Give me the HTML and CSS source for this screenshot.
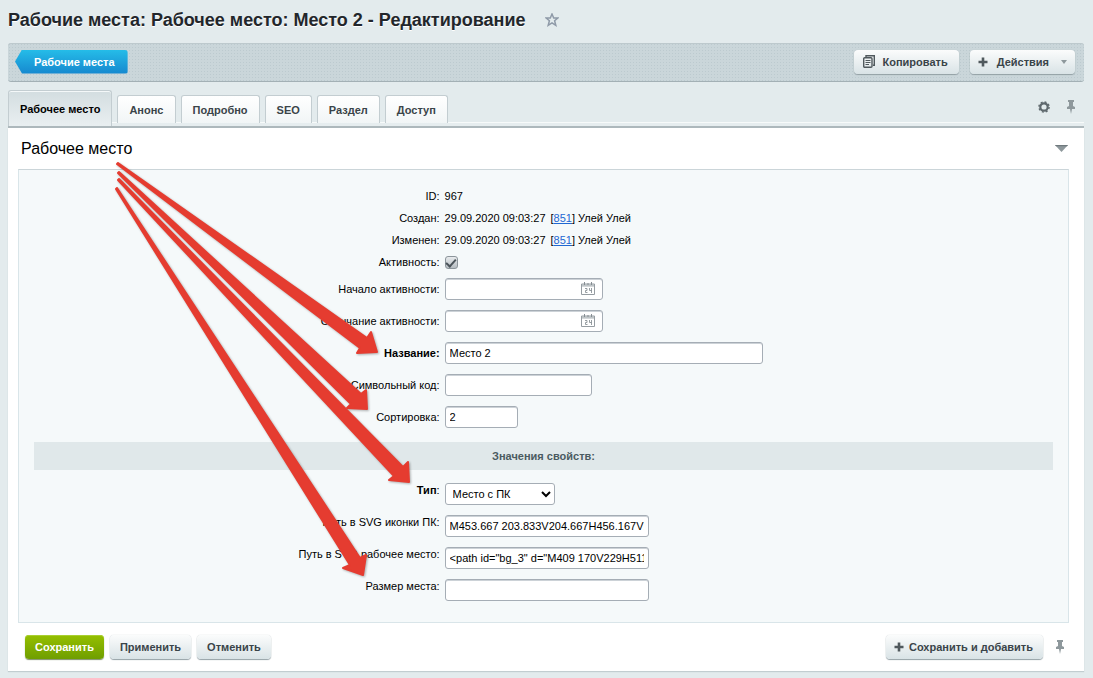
FILE: index.html
```html
<!DOCTYPE html>
<html lang="ru">
<head>
<meta charset="utf-8">
<title>Рабочее место: Место 2 - Редактирование</title>
<link rel="stylesheet" href="styles.css">
</head>
<body>
<svg class="sprite" aria-hidden="true">
  <symbol id="pin" viewBox="0 0 10 14"><path d="M2 0h6v2H7v4l2 1v2H6l-1 5-1-5H1V7l2-1V2H2z" fill="#8e989c"/></symbol>
  <symbol id="plus" viewBox="0 0 10 10"><path d="M3.700.5h2.600v3.200h3.200v2.600H6.300v3.200H3.700V6.300H.5V3.700h3.200z" fill="#50595d"/></symbol>
  <symbol id="calendar" viewBox="0 0 14 13">
    <path d="M.5 2h13v10.500H.5z" fill="#fff" stroke="#969da2"/>
    <path d="M1 3h12M1 4h12" stroke="#a9b0b4"/>
    <path d="M3.500 0v3M7 1v2M10.500 0v3" stroke="#868e93"/>
    <path d="M4 6.500h2v2H4.500v2h2M8.500 6v2.500h2.500M10.500 6v5" fill="none" stroke="#8c9499" stroke-width=".9"/>
  </symbol>
</svg>
<header class="page-head">
  <h1 class="page-title">Рабочие места: Рабочее место: Место 2 - Редактирование</h1>
  <button class="icon-btn" type="button" aria-label="В избранное">
    <svg width="14" height="14" viewBox="0 0 14 14"><path d="M7 1l1.700 4h4.200L9.600 7.800l1.200 4.500L7 9.800l-3.800 2.500 1.200-4.500L1.100 5h4.200z" fill="none" stroke="#8f9aa8" stroke-width="1.500"/></svg>
  </button>
</header>
<main class="page">
  <nav class="toolbar">
    <a class="back" href="#">Рабочие места</a>
    <div class="toolbar-actions">
      <button class="btn" type="button">
        <svg class="copy-icon" width="12" height="13" viewBox="0 0 12 13"><path d="M3 2.500V.7h8.300v9.600H10" fill="none" stroke="#50595d" stroke-width="1.400"/><rect x=".7" y="2.700" width="8.300" height="9.600" rx="1" fill="none" stroke="#50595d" stroke-width="1.400"/><path d="M2.500 5.500h5M2.500 7.500h5M2.500 9.500h3.500" stroke="#50595d"/></svg>
        Копировать
      </button>
      <button class="btn" type="button">
        <svg class="plus-icon" width="10" height="10"><use href="#plus"/></svg>
        Действия
        <svg class="caret" width="6" height="4" viewBox="0 0 6 4"><path d="M0 0h6L3 4z" fill="#8e989c"/></svg>
      </button>
    </div>
  </nav>
  <div class="tabs">
    <button class="tab tab-active" type="button">Рабочее место</button>
    <button class="tab" type="button">Анонс</button>
    <button class="tab" type="button">Подробно</button>
    <button class="tab" type="button">SEO</button>
    <button class="tab" type="button">Раздел</button>
    <button class="tab" type="button">Доступ</button>
    <div class="tab-tools">
      <button class="icon-btn" type="button" aria-label="Настройки">
        <svg width="12" height="12" viewBox="0 0 12 12"><circle cx="6" cy="6" r="3.700" fill="none" stroke="#5f696e" stroke-width="2.200"/><circle cx="6" cy="6" r="5.100" fill="none" stroke="#5f696e" stroke-width="1.400" stroke-dasharray="2 2"/></svg>
      </button>
      <button class="icon-btn" type="button" aria-label="Закрепить"><svg width="10" height="14"><use href="#pin"/></svg></button>
    </div>
  </div>
  <form class="card">
    <div class="card-head">
      <h2 class="card-title">Рабочее место</h2>
      <button class="icon-btn" type="button" aria-label="Свернуть">
        <svg width="13" height="7" viewBox="0 0 13 7"><path d="M0 0h13L6.500 7z" fill="#8e989c"/><path d="M0 0h13L12 1.200H1z" fill="#6f797d"/></svg>
      </button>
    </div>
    <div class="panel">
      <div class="row"><span class="label">ID:</span><span>967</span></div>
      <div class="row"><span class="label">Создан:</span><span class="stamp"><span>29.09.2020 09:03:27</span><span>[<a href="#">851</a>] Улей Улей</span></span></div>
      <div class="row"><span class="label">Изменен:</span><span class="stamp"><span>29.09.2020 09:03:27</span><span>[<a href="#">851</a>] Улей Улей</span></span></div>
      <div class="row"><label class="label" for="active">Активность:</label><input class="check" type="checkbox" id="active" checked></div>
      <div class="row row-field"><label class="label" for="from">Начало активности:</label><div class="date"><input class="field" type="text" id="from"><svg class="date-icon" width="14" height="13"><use href="#calendar"/></svg></div></div>
      <div class="row row-field"><label class="label" for="to">Окончание активности:</label><div class="date"><input class="field" type="text" id="to"><svg class="date-icon" width="14" height="13"><use href="#calendar"/></svg></div></div>
      <div class="row row-field"><label class="label required" for="name">Название:</label><input class="field field-name" type="text" id="name" value="Место 2"></div>
      <div class="row row-field"><label class="label" for="code">Символьный код:</label><input class="field field-code" type="text" id="code"></div>
      <div class="row row-field"><label class="label" for="sort">Сортировка:</label><input class="field field-sort" type="text" id="sort" value="2"></div>
      <h3 class="section">Значения свойств:</h3>
      <div class="row row-field row-prop"><label class="label" for="type"><b>Тип</b>:</label><select class="field field-type" id="type"><option>Место с ПК</option></select></div>
      <div class="row row-field row-prop"><label class="label" for="icon">Путь в SVG иконки ПК:</label><input class="field field-prop" type="text" id="icon" value="M453.667 203.833V204.667H456.167V199.667"></div>
      <div class="row row-field row-prop"><label class="label" for="place">Путь в SVG рабочее место:</label><input class="field field-prop" type="text" id="place" value="&lt;path id=&quot;bg_3&quot; d=&quot;M409 170V229H511V170"></div>
      <div class="row row-field row-prop"><label class="label" for="size">Размер места:</label><input class="field field-prop" type="text" id="size"></div>
    </div>
    <footer class="card-foot">
      <button class="btn btn-save" type="button">Сохранить</button>
      <button class="btn btn-foot" type="button">Применить</button>
      <button class="btn btn-foot" type="button">Отменить</button>
      <button class="btn btn-add" type="button"><svg width="10" height="10"><use href="#plus"/></svg>Сохранить и добавить</button>
      <button class="icon-btn" type="button" aria-label="Закрепить"><svg width="10" height="14"><use href="#pin"/></svg></button>
    </footer>
  </form>
</main>
<svg class="arrows" width="420" height="590" viewBox="0 0 420 590" aria-hidden="true">
  <g fill="#e53c30" stroke="#e53c30" stroke-width="2" stroke-linejoin="round">
    <path d="M117 164L118 163L367 338L371 332L377 352L357 353L360 348Z"/>
    <path d="M118 173L119 172L361 394L366 390L367 409L347 408L351 404Z"/>
    <path d="M118 180L119 179L403 467L408 462L409 482L389 480L394 476Z"/>
    <path d="M116 189L117 188L360 558L366 555L363 575L343 568L350 565Z"/>
  </g>
</svg>
</body>
</html>
```
FILE: styles.css
```css
* { box-sizing: border-box; }
body {
  margin: 0;
  min-height: 100vh;
  position: relative;
  background: #e3ebed;
  color: #000;
  font: 11px/14px "Liberation Sans", Arial, sans-serif;
}
button, input, select { font-family: inherit; }
a { color: #1f67d2; }
.sprite { position: absolute; width: 0; height: 0; }
.icon-btn { display: flex; padding: 0; border: 0; background: none; }

.page-head { display: flex; align-items: center; gap: 19px; padding: 8px 8px 11px; }
.page-title { margin: 0; font-size: 18px; line-height: 24px; color: #22262b; text-shadow: 0 1px 0 #fff; }
.page { padding: 0 9px 7px 8px; }

.toolbar {
  display: flex;
  align-items: center;
  justify-content: space-between;
  height: 39px;
  padding: 0 9px 1px 7px;
  border-bottom: 1px solid #a3b0b5;
  border-radius: 3px;
  background: radial-gradient(circle, #bccacf 0.8px, #cad6da 1px) 0 0 / 3px 3px;
  box-shadow: inset 0 1px 0 #bdc9cd;
}
.back {
  padding: 5px 13px 5px 19px;
  border-radius: 3px;
  background: linear-gradient(#25bce8, #1688cf);
  clip-path: polygon(0 50%, 7px 0, 100% 0, 100% 100%, 7px 100%);
  color: #fff;
  font-weight: bold;
  text-decoration: none;
}
.toolbar-actions { display: flex; gap: 11px; }
.btn {
  display: flex;
  align-items: center;
  height: 24px;
  padding: 0 11px;
  border: 0;
  border-radius: 4px;
  background: linear-gradient(#fbfcfc, #d9e3e6);
  box-shadow: 0 1px 1px #93a0a5, 0 0 1px #b5c0c4;
  color: #3a4449;
  font-size: 11px;
  font-weight: bold;
}
.copy-icon { margin: 0 8px 0 -2px; }
.plus-icon { margin: 0 9px 0 -3px; }
.caret { margin: 0 -3px 0 12px; }

.tabs {
  display: flex;
  align-items: flex-end;
  height: 46px;
  gap: 5px;
  padding-bottom: 3px;
  border-bottom: 2px solid #adb8bc;
  background: linear-gradient(#f7fafa 1px, #e6edef 1px) bottom / 100% 4px no-repeat;
}
.tab {
  height: 28px;
  padding: 0 11px;
  border: 1px solid #c3cdd1;
  border-bottom: 0;
  border-radius: 3px 3px 0 0;
  background: linear-gradient(#fff, #f1f5f6);
  color: #3a4449;
  font-size: 11px;
  font-weight: bold;
}
.tab-active {
  height: 36px;
  margin-bottom: -3px;
  background: linear-gradient(#d3dde0, #e9eff1);
  box-shadow: inset 0 1px 0 #f4f8f9;
  color: #000;
}
.tab-tools { display: flex; align-items: center; gap: 16px; margin: 0 8px 9px auto; }

.card { background: #fff; box-shadow: 0 1px 1px #c2cdd0; }
.card-head { display: flex; align-items: center; justify-content: space-between; height: 41px; padding: 0 16px 0 13px; }
.card-title { margin: 0; font-size: 16px; line-height: 20px; font-weight: normal; }
.panel {
  margin: 0 15px 0 10px;
  padding: 15px 15px 16px;
  border: 1px solid #d9e5e9;
  border-top-color: #cbd5d9;
  background: #f5f9fa;
}
.row { display: grid; grid-template-columns: 40% 1fr; align-items: center; min-height: 22px; }
.row > :last-child { margin-left: 3px; }
.row-field { min-height: 32px; }
.label { padding-right: 2px; text-align: right; }
.required { font-weight: bold; }
.row-prop .label { padding-bottom: 8px; }
.stamp { display: flex; gap: 5px; }
.check {
  appearance: none;
  width: 13px;
  height: 13px;
  margin: 0;
  border: 1px solid #8c959b;
  border-radius: 3px;
  background: linear-gradient(#e8ebed, #b5bcc1);
}
.check:checked::after {
  content: "";
  display: block;
  width: 4px;
  height: 8px;
  margin: 0 auto;
  border: solid #4b545a;
  border-width: 0 2px 2px 0;
  transform: rotate(42deg);
}
.field {
  width: 100%;
  height: 22px;
  padding: 0 4px;
  border: 1px solid #a5adb5;
  border-radius: 3px;
  background: #fff;
  color: #000;
  font-size: 11px;
  box-shadow: inset 0 1px 0 #ccd2d7;
}
.date { position: relative; width: 158px; }
.date .field { display: block; padding-right: 24px; }
.date-icon { position: absolute; top: 4px; right: 8px; }
.row > .field-name { width: 318px; }
.row > .field-code { width: 147px; }
.row > .field-sort { width: 73px; }
.row > .field-type { width: 110px; padding: 0 3px; box-shadow: none; }
.row > .field-prop { width: 204px; }
.section {
  margin: 9px 0 8px;
  padding: 7px;
  background: #e0e8ea;
  color: #4b5b61;
  font-size: 11px;
  line-height: 14px;
  text-align: center;
}
.card-foot { display: flex; align-items: center; gap: 6px; padding: 12px 19px 12px 17px; }
.btn-foot { padding: 0 10px; }
.btn-save { padding: 0 10px; background: linear-gradient(#95bf00, #6f9e00); box-shadow: 0 1px 1px #7f8f6a, inset 0 1px 0 #a9cf30; color: #fff; }
.btn-add { gap: 5px; margin: 0 6px 0 auto; padding: 0 10px 0 8px; }
.arrows { position: absolute; top: 0; left: 0; pointer-events: none; filter: drop-shadow(1px 1px 1px rgba(0, 0, 0, 0.3)); }
```
